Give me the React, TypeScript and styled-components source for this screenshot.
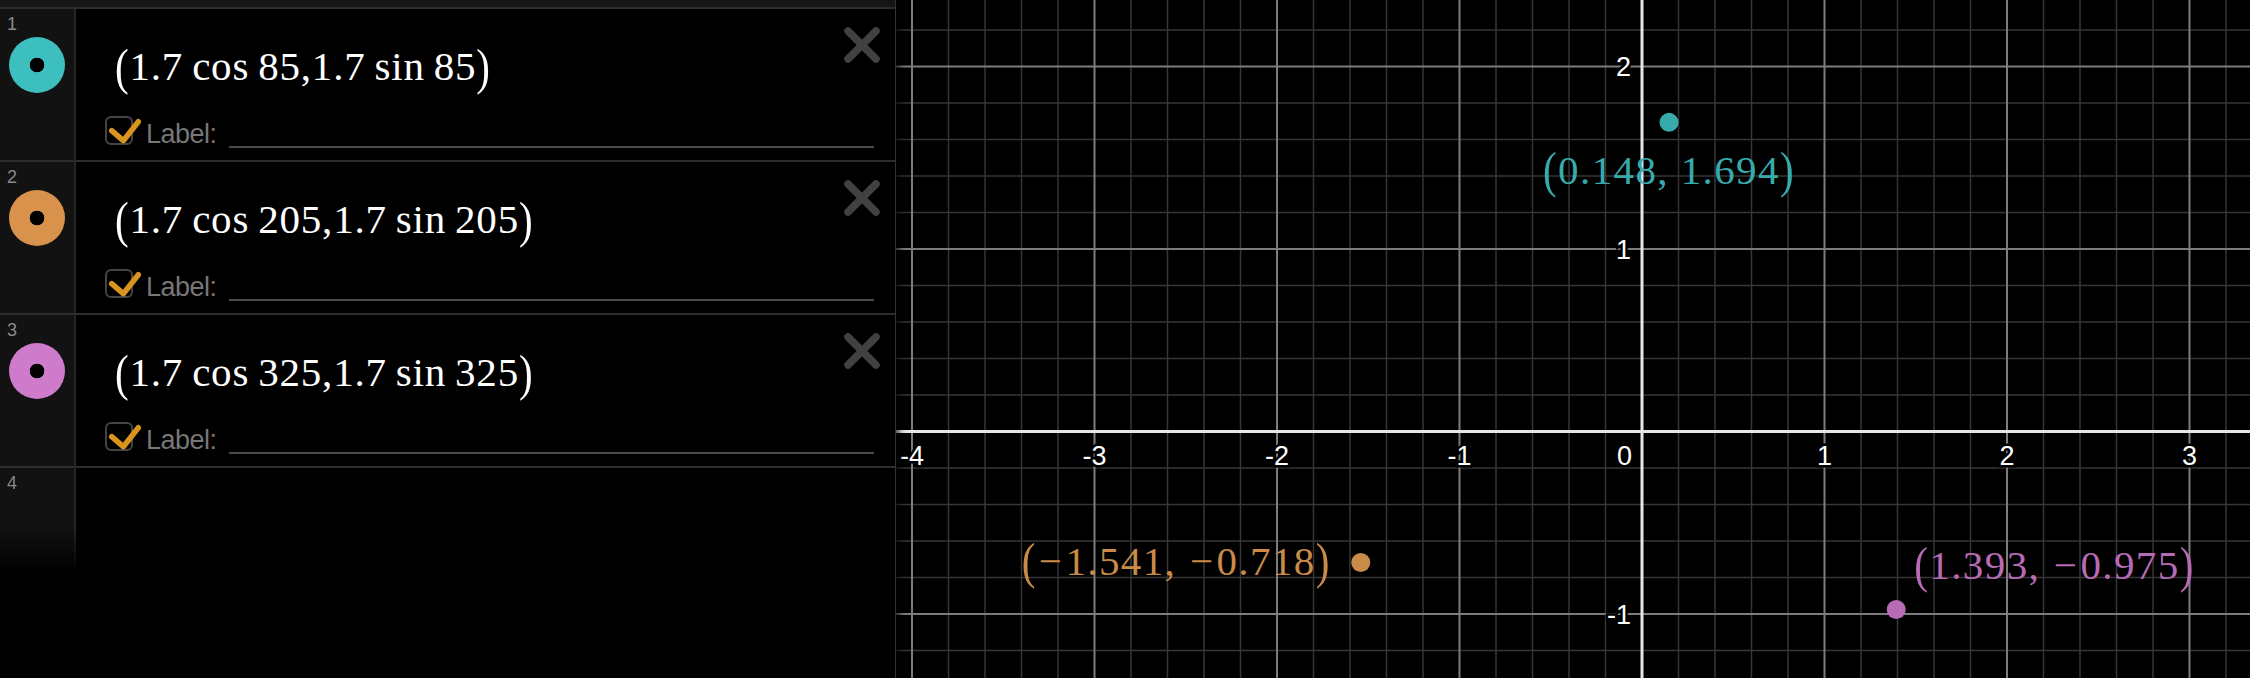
import React from 'react'
import styled, { createGlobalStyle } from 'styled-components'

const GlobalStyle = createGlobalStyle`
  html, body {
    margin: 0;
    padding: 0;
    background: #000;
    overflow: hidden;
  }
`

// graph geometry (px, relative to the graph area)
const GRAPH_W = 1354
const GRAPH_H = 678
const OX = 746
const OY = 431.5
const UNIT = 182.5
const STEP = UNIT / 5

const EXPRESSIONS = [
  { id: 1, color: '#3dbfc0', angle: '85' },
  { id: 2, color: '#d8924c', angle: '205' },
  { id: 3, color: '#cf7bcb', angle: '325' },
]

const POINTS = [
  { x: 0.148, y: 1.694, color: '#37abac', text: '0.148, 1.694', place: 'below' },
  { x: -1.541, y: -0.718, color: '#c98b47', text: '\u22121.541, \u22120.718', place: 'left' },
  { x: 1.393, y: -0.975, color: '#b86bb5', text: '1.393, \u22120.975', place: 'aboveRight' },
]

const Page = styled.div`
  display: flex;
  width: 2250px;
  height: 678px;
  background: #000;
  font-family: 'Liberation Sans', Arial, sans-serif;
`

const ExpressionPanel = styled.div`
  width: 895px;
  flex-shrink: 0;
  display: flex;
  flex-direction: column;
  background: #000;
  border-right: 1px solid #333;
  box-shadow: 2px 0 8px rgba(0, 0, 0, 0.9);
  position: relative;
  z-index: 1;
`

const TopStrip = styled.div`
  height: 7px;
  background: #151515;
  border-bottom: 2px solid #2d2d2d;
`

const Row = styled.div<{ $last?: boolean }>`
  display: flex;
  height: ${(p) => (p.$last ? '105px' : '151px')};
  border-bottom: ${(p) => (p.$last ? 'none' : '2px solid #2d2d2d')};
`

const Gutter = styled.div<{ $fade?: boolean }>`
  width: 74px;
  flex-shrink: 0;
  display: flex;
  flex-direction: column;
  background: #121212;
  border-right: 2px solid #262626;
  ${(p) => p.$fade && 'mask-image: linear-gradient(#000 55%, transparent 100%);'}
`

const RowNumber = styled.div`
  padding: 6px 0 0 7px;
  font-size: 18px;
  line-height: 18px;
  color: #8a8a8a;
`

const Swatch = styled.div<{ $color: string }>`
  align-self: center;
  margin-top: 4px;
  width: 56px;
  height: 56px;
  border-radius: 50%;
  background: radial-gradient(circle, #000 0 7px, ${(p) => p.$color} 7.6px);
`

const Content = styled.div`
  flex: 1;
  display: flex;
  flex-direction: column;
  padding-left: 29px;
  position: relative;
`

const MathText = styled.span<{ $spacing: number }>`
  display: inline-block;
  font-family: 'Liberation Serif', 'DejaVu Serif', serif;
  font-size: 41px;
  line-height: 1;
  letter-spacing: ${(p) => p.$spacing}px;
  white-space: pre;
`

const Paren = styled.span`
  display: inline-block;
  transform: scaleY(1.25);
`

const Minus = styled.span`
  margin: 0 2px;
`

const Formula = styled.div`
  margin: 32px 0 0 10px;
  height: 50px;
  line-height: 50px;
  color: #fff;
  ${MathText} {
    line-height: 50px;
  }
`

const LabelRow = styled.div`
  display: flex;
  align-items: flex-start;
  margin-top: 25px;
  padding-right: 21px;
`

const LabelText = styled.span`
  margin: 3px 0 0 3px;
  font-size: 27px;
  line-height: 30px;
  letter-spacing: -0.5px;
  color: #777;
`

const LabelInput = styled.div`
  flex: 1;
  height: 30px;
  margin-left: 12px;
  border-bottom: 2px solid #4a4a4a;
`

const CloseButton = styled.div`
  position: absolute;
  top: 17px;
  right: 14px;
  width: 38px;
  height: 38px;
`

const Graph = styled.div`
  flex: 1;
  position: relative;
  overflow: hidden;
  background: #000;
`

const GraphSvg = styled.svg`
  display: block;
`

const AxisText = styled.text`
  font-family: 'Liberation Sans', Arial, sans-serif;
  font-size: 27px;
  fill: #fff;
  stroke: #000;
  stroke-width: 5px;
  paint-order: stroke;
`

const PointLabel = styled.div<{ $color: string }>`
  position: absolute;
  color: ${(p) => p.$color};
`

const Checkbox = () => (
  <svg width="38" height="30" viewBox="0 0 38 30">
    <rect x="1" y="1" width="26" height="27" rx="5" fill="none" stroke="#444" strokeWidth="2" />
    <polyline
      points="6.7,14.7 18.3,24.7 33.3,5.7"
      fill="none"
      stroke="#d9931f"
      strokeWidth="5.5"
      strokeLinecap="round"
      strokeLinejoin="round"
    />
  </svg>
)

const CloseIcon = () => (
  <svg width="38" height="38" viewBox="0 0 38 38">
    <path d="M5 5 L33 33 M33 5 L5 33" stroke="#414141" strokeWidth="7.5" strokeLinecap="round" />
  </svg>
)

// wider minus signs, like a math renderer would set them
const withMinus = (text: string) =>
  text.split('\u2212').map((part, i) => (
    <React.Fragment key={i}>
      {i > 0 && <Minus>{'\u2212'}</Minus>}
      {part}
    </React.Fragment>
  ))

const Parens = ({ children, spacing }: { children: React.ReactNode; spacing: number }) => (
  <MathText $spacing={spacing}>
    <Paren>(</Paren>
    {children}
    <Paren>)</Paren>
  </MathText>
)

const ExpressionRow = ({ id, color, angle }: { id: number; color: string; angle: string }) => (
  <Row>
    <Gutter>
      <RowNumber>{id}</RowNumber>
      <Swatch $color={color} />
    </Gutter>
    <Content>
      <Formula>
        <Parens spacing={0.8}>
          {`1.7\u2009cos\u2009${angle},1.7\u2009sin\u2009${angle}`}
        </Parens>
      </Formula>
      <LabelRow>
        <Checkbox />
        <LabelText>Label:</LabelText>
        <LabelInput />
      </LabelRow>
      <CloseButton>
        <CloseIcon />
      </CloseButton>
    </Content>
  </Row>
)

const range = (from: number, to: number) => {
  const out: number[] = []
  for (let k = from; k <= to; k++) out.push(k)
  return out
}

const GridLines = () => {
  const vx = range(Math.ceil(-OX / STEP), Math.floor((GRAPH_W - OX) / STEP))
  const hy = range(Math.ceil(-OY / STEP), Math.floor((GRAPH_H - OY) / STEP))
  const minorV = vx.filter((k) => k % 5 !== 0)
  const majorV = vx.filter((k) => k % 5 === 0 && k !== 0)
  const minorH = hy.filter((k) => k % 5 !== 0)
  const majorH = hy.filter((k) => k % 5 === 0 && k !== 0)
  return (
    <g>
      <g stroke="#363636" strokeWidth="1.5">
        {minorV.map((k) => (
          <line key={'mv' + k} x1={OX + k * STEP} x2={OX + k * STEP} y1={0} y2={GRAPH_H} />
        ))}
        {minorH.map((k) => (
          <line key={'mh' + k} y1={OY + k * STEP} y2={OY + k * STEP} x1={0} x2={GRAPH_W} />
        ))}
      </g>
      <g stroke="#7c7c7c" strokeWidth="2">
        {majorV.map((k) => (
          <line key={'Mv' + k} x1={OX + k * STEP} x2={OX + k * STEP} y1={0} y2={GRAPH_H} />
        ))}
        {majorH.map((k) => (
          <line key={'Mh' + k} y1={OY + k * STEP} y2={OY + k * STEP} x1={0} x2={GRAPH_W} />
        ))}
      </g>
      <g stroke="#e6e6e6" strokeWidth="3">
        <line x1={OX} x2={OX} y1={0} y2={GRAPH_H} />
        <line y1={OY} y2={OY} x1={0} x2={GRAPH_W} />
      </g>
    </g>
  )
}

const AxisNumbers = () => (
  <g>
    {[-4, -3, -2, -1, 1, 2, 3].map((i) => (
      <AxisText key={'x' + i} x={OX + i * UNIT} y={OY + 33} textAnchor="middle">
        {i < 0 ? `-${-i}` : i}
      </AxisText>
    ))}
    <AxisText x={OX - 10} y={OY + 33} textAnchor="end">
      0
    </AxisText>
    {[2, 1, -1].map((j) => (
      <AxisText key={'y' + j} x={OX - 11} y={OY - j * UNIT + 9.5} textAnchor="end">
        {j < 0 ? `-${-j}` : j}
      </AxisText>
    ))}
  </g>
)

const labelStyle = (px: number, py: number, place: string): React.CSSProperties => {
  if (place === 'below') return { left: px, top: py + 28, transform: 'translateX(-50%)' }
  if (place === 'left') return { right: GRAPH_W - (px - 30), top: py - 22 }
  return { left: px + 18, top: py - 64 }
}

export default function App() {
  return (
    <>
      <GlobalStyle />
      <Page>
        <ExpressionPanel>
          <TopStrip />
          {EXPRESSIONS.map((e) => (
            <ExpressionRow key={e.id} {...e} />
          ))}
          <Row $last>
            <Gutter $fade>
              <RowNumber>4</RowNumber>
            </Gutter>
            <Content />
          </Row>
        </ExpressionPanel>
        <Graph>
          <GraphSvg width={GRAPH_W} height={GRAPH_H}>
            <GridLines />
            <AxisNumbers />
            {POINTS.map((p) => (
              <circle key={p.text} cx={OX + p.x * UNIT} cy={OY - p.y * UNIT} r="9.5" fill={p.color} />
            ))}
          </GraphSvg>
          {POINTS.map((p) => (
            <PointLabel
              key={p.text}
              $color={p.color}
              style={labelStyle(OX + p.x * UNIT, OY - p.y * UNIT, p.place)}
            >
              <Parens spacing={1.4}>{withMinus(p.text)}</Parens>
            </PointLabel>
          ))}
        </Graph>
      </Page>
    </>
  )
}
